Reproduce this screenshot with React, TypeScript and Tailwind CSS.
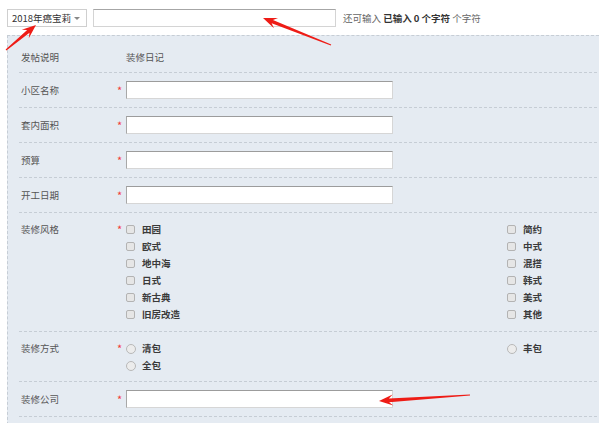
import React from "react";

const FONT = "font-['Noto_Sans_CJK_SC','Noto_Sans',sans-serif]";

function Arrow({ tx, ty, px, py }: { tx: number; ty: number; px: number; py: number }) {
  const dx = px - tx;
  const dy = py - ty;
  const len = Math.hypot(dx, dy);
  const ux = dx / len;
  const uy = dy / len;
  const nx = -uy;
  const ny = ux;
  const L = 14;
  const W = 5.5;
  const bx = px - ux * L;
  const by = py - uy * L;
  const bx2 = px - ux * (L - 4);
  const by2 = py - uy * (L - 4);
  const pts: [number, number][] = [
    [tx + nx * 0.6, ty + ny * 0.6],
    [bx2 + nx * 1.8, by2 + ny * 1.8],
    [bx + nx * W, by + ny * W],
    [px, py],
    [bx - nx * W, by - ny * W],
    [bx2 - nx * 1.8, by2 - ny * 1.8],
    [tx - nx * 0.6, ty - ny * 0.6],
  ];
  return <polygon points={pts.map((p) => p.join(",")).join(" ")} fill="#ee1c16" />;
}

function TextInput() {
  return (
    <div className="w-[267px] h-[18px] bg-white border border-[#d6d6d6] border-t-[#9c9c9c] border-l-[#a8a8a8]" />
  );
}

function Star() {
  return <span className="w-[10px] text-[#f23a3a] text-[11px] leading-[17px] pl-[1px]">*</span>;
}

function Checkbox({ label }: { label: string }) {
  return (
    <div className="flex items-center h-[17px]">
      <span className="w-[9px] h-[9px] rounded-[2px] border border-[#b3b3b3] bg-[#e6e6e6]" />
      <span className="ml-[7px] text-[#3a3a3a] font-bold">{label}</span>
    </div>
  );
}

function Radio({ label }: { label: string }) {
  return (
    <div className="flex items-center h-[17px]">
      <span className="w-[10px] h-[10px] rounded-full border border-[#b8b8b8] bg-[#ececec]" />
      <span className="ml-[6px] text-[#3a3a3a] font-bold">{label}</span>
    </div>
  );
}

function InputRow({ label }: { label: string }) {
  return (
    <div className="flex items-center pl-[2px] py-[8px] border-b border-dashed border-[#c6cdd5]">
      <span className="w-[95px] text-[#555]">{label}</span>
      <Star />
      <TextInput />
    </div>
  );
}

export default function App() {
  const left = ["田园", "欧式", "地中海", "日式", "新古典", "旧房改造"];
  const right = ["简约", "中式", "混搭", "韩式", "美式", "其他"];
  return (
    <div className={`relative w-[600px] h-[423px] bg-white overflow-hidden text-[9.5px] leading-[17px] ${FONT}`}>
      <div className="flex items-center pl-[7px] pt-[9px]">
        <div className="relative w-[80px] h-[18px] border border-[#cfcfcf] bg-white flex items-center pl-[4px] text-[#333]">
          <span>2018年癌宝莉</span>
          <span className="absolute right-[6px] top-[7px] w-0 h-0 border-l-[3px] border-r-[3px] border-t-[3px] border-l-transparent border-r-transparent border-t-[#888]" />
        </div>
        <div className="ml-[6px] w-[243px] h-[18px] bg-white border border-[#d4d4d4] border-t-[#a6a6a6]" />
        <div className="ml-[7px] text-[#666]">
          还可输入 <span className="font-bold text-[#333]">已输入 0 个字符</span> 个字符
        </div>
      </div>

      <div className="mt-[8px] ml-[7px] w-[592px] h-[400px] bg-[#e5ebf2] border-l border-t border-dashed border-[#c6cdd5] pl-[11px] pr-[2px] pt-[6px]">
        <div className="flex items-center pl-[2px] pt-[7px] pb-[6px] border-b border-dashed border-[#c6cdd5]">
          <span className="w-[105px] text-[#555]">发帖说明</span>
          <span className="text-[#555]">装修日记</span>
        </div>
        <InputRow label="小区名称" />
        <InputRow label="套内面积" />
        <InputRow label="预算" />
        <InputRow label="开工日期" />

        <div className="flex items-start pl-[2px] py-[8px] border-b border-dashed border-[#c6cdd5]">
          <span className="w-[95px] text-[#555]">装修风格</span>
          <Star />
          <div className="flex">
            <div className="w-[381px] flex flex-col">
              {left.map((l) => (
                <Checkbox key={l} label={l} />
              ))}
            </div>
            <div className="flex flex-col">
              {right.map((l) => (
                <Checkbox key={l} label={l} />
              ))}
            </div>
          </div>
        </div>

        <div className="flex items-start pl-[2px] pt-[8px] pb-[7px] border-b border-dashed border-[#c6cdd5]">
          <span className="w-[95px] text-[#555]">装修方式</span>
          <Star />
          <div className="flex">
            <div className="w-[381px] flex flex-col">
              <Radio label="清包" />
              <Radio label="全包" />
            </div>
            <div className="flex flex-col">
              <Radio label="丰包" />
            </div>
          </div>
        </div>

        <InputRow label="装修公司" />
      </div>

      <svg className="absolute left-0 top-0 pointer-events-none" width="600" height="423" viewBox="0 0 600 423">
        <Arrow tx={6} ty={50} px={36} py={25} />
        <Arrow tx={331} ty={45} px={263} py={18} />
        <Arrow tx={470} ty={395} px={379} py={401} />
      </svg>
    </div>
  );
}
